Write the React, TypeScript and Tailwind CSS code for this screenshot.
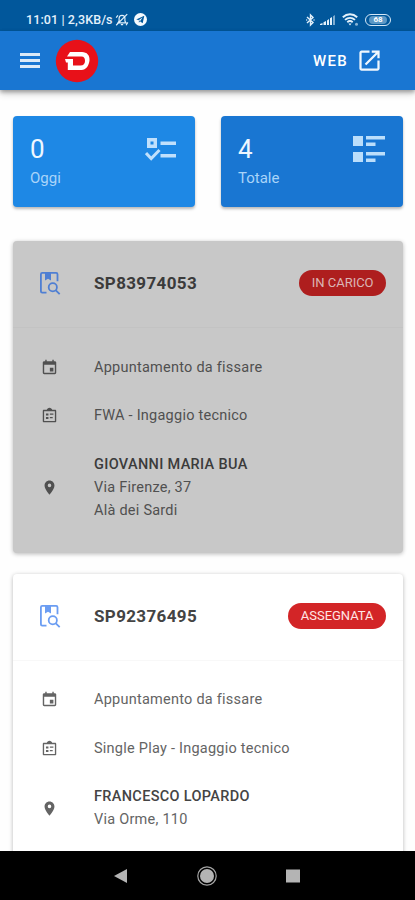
import React from "react";

function StatusBar() {
  return (
    <div className="flex h-[31px] items-end bg-[#01579b] pb-[4px] pl-[26px] pr-[24px] text-[#e3f1fb]">
      <div className="flex h-[15px] items-center">
        <span className="w-[87px] whitespace-nowrap text-[12.5px] font-medium leading-[15px] tracking-[0.1px]">11:01 | 2,3KB/s</span>
        <svg className="ml-[2px] h-[14px] w-[14px]" viewBox="0 0 24 24" fill="none" stroke="currentColor" strokeWidth="2">
          <path d="M5 17h14l-2-3V9c0-3-2-5-5-5S7 6 7 9v5zM10 20h4M2 21 21 2M2 8l3-4M22 16l-3 5" />
        </svg>
        <svg className="ml-[5px] h-[13px] w-[13px]" viewBox="0 0 24 24">
          <circle cx="12" cy="12" r="12" fill="#f4faff" />
          <path d="M4 12 19 5l-3 14-5-4-2 3v-5z" fill="#01579b" />
          <path d="m9 13 7-5-5 7z" fill="#f4faff" />
        </svg>
      </div>
      <div className="ml-auto flex h-[15px] items-center">
        <svg className="h-[14px] w-[9px]" viewBox="0 0 9 14" fill="none" stroke="currentColor" strokeWidth="1.4">
          <path d="m1 4 6 5.500L4.500 12V2L7 4.500 1 10" />
          <path d="M.2 7h1M7.500 7h1" />
        </svg>
        <svg className="ml-[5px] h-[12px] w-[16px]" viewBox="0 0 16 12" fill="currentColor">
          <path d="M0 11h2.500V9L0 10zM3.500 11H6V7L3.500 8.300zM7 11h2V5L7 6.500zM10 11h2V3l-2 1.300z" />
          <path d="M13 11h2V1l-2 1.200z" opacity=".55" />
        </svg>
        <svg className="ml-[6px] h-[13px] w-[17px]" viewBox="0 0 17 13" fill="none" stroke="currentColor" strokeWidth="1.9">
          <path d="M.8 4.300c4.300-4 10.100-4 14.400 0M3 6.900c3-2.700 7-2.700 10 0M5.300 9.300c1.700-1.500 3.700-1.500 5.400 0" />
          <path d="m6.500 10.600 1.500 1.800 1.500-1.800z" fill="currentColor" stroke="none" />
          <circle cx="14.500" cy="11.200" r="1.500" fill="currentColor" stroke="none" opacity=".6" />
        </svg>
        <div className="ml-[6px] flex h-[12px] w-[26px] items-center justify-center rounded-full border border-[#d4e8f7]">
          <span className="flex h-[8px] w-[18px] items-center justify-center rounded-full bg-[#5b97c5] text-[8px] font-bold leading-none text-white">68</span>
        </div>
      </div>
    </div>
  );
}

function AppBar() {
  return (
    <header className="flex h-[59px] items-center bg-[#1976d2] pl-[20px] pr-[32px] text-white shadow-[0_2px_4px_rgba(0,0,0,0.3),0_4px_7px_rgba(0,0,0,0.16)]">
      <div className="flex w-[20px] flex-col gap-[3px] opacity-85">
        <span className="h-[3px] bg-white" />
        <span className="h-[3px] bg-white" />
        <span className="h-[3px] bg-white" />
      </div>
      <svg className="ml-[15px] h-[44px] w-[44px]" viewBox="0 0 44 44">
        <circle cx="22" cy="22" r="21.200" fill="#e81119" />
        <path fill="#fff" fillRule="evenodd" d="M15 13h12c5 0 8 3.500 7.500 8.500S31 31 26.500 31H12.800v-7.500H11L10 20h8v6.500h7.500c3 0 4.500-2 4.500-4.500 0-3-1-4.500-3.500-4.500H12z" />
      </svg>
      <span className="ml-auto text-[15px] font-medium leading-[20px] tracking-[1.3px]">WEB</span>
      <svg className="ml-[8px] h-[27px] w-[27px]" viewBox="0 0 24 24" fill="#f1f8fe">
        <path d="M19 19H5V5h7V3H5c-1.110 0-2 .9-2 2v14c0 1.100.89 2 2 2h14c1.100 0 2-.9 2-2v-7h-2v7zM14 3v2h3.590l-9.830 9.830 1.410 1.410L19 6.410V10h2V3h-7z" />
      </svg>
    </header>
  );
}

function BookSearch({ color }: { color: string }) {
  return (
    <svg className="h-[24px] w-[22px]" viewBox="0 0 22 24" fill="none" stroke={color} strokeWidth="1.800">
      <path d="M7.500 21.600H3.200c-.9 0-1.300-.5-1.300-1.300V3.200c0-.8.4-1.300 1.300-1.300h14c.9 0 1.300.5 1.300 1.300v7" />
      <path d="M6 2v7.500l3-1.800 3 1.800V2z" fill={color} stroke="none" />
      <circle cx="13.800" cy="16.300" r="4.100" />
      <path d="m16.800 19.300 3.900 3.900" />
    </svg>
  );
}

function CalendarIcon() {
  return (
    <svg className="h-[17px] w-[17px]" viewBox="0 0 24 24" fill="currentColor">
      <path d="M19.500 3H18V1h-2v2H8V1H6v2H4.500C3.400 3 2.500 3.900 2.500 5v14.500c0 1.100.9 2 2 2h15c1.100 0 2-.9 2-2V5c0-1.100-.9-2-2-2zm0 16.500h-15V8h15v11.500zM12.500 12.500h5v5h-5z" />
    </svg>
  );
}

function BallotIcon() {
  return (
    <svg className="h-[17px] w-[17px]" viewBox="0 0 24 24" fill="currentColor">
      <path d="M20 4h-4.180C15.400 2.400 13.800 1 12 1s-3.400 1.400-3.820 3H4c-.9 0-1.500.6-1.500 1.500v14.500c0 .9.600 1.500 1.500 1.500h16c.9 0 1.500-.6 1.500-1.500V5.500c0-.9-.6-1.500-1.500-1.500zm-.4 15.600H4.400V6h15.200v13.600zM7 9h3.500v3H7zM7 14h3.500v3H7zM12.500 9h5v2h-5zM12.500 14h4v2h-4z" />
    </svg>
  );
}

function PinIcon() {
  return (
    <svg className="h-[17px] w-[17px]" viewBox="0 0 24 24" fill="currentColor">
      <path d="M12 2C8.130 2 5 5.130 5 9c0 5.250 7 13 7 13s7-7.750 7-13c0-3.870-3.130-7-7-7zm0 9.500a2.500 2.500 0 0 1 0-5 2.500 2.500 0 0 1 0 5z" />
    </svg>
  );
}

function StatCard({ value, label, bg, children }: { value: string; label: string; bg: string; children: React.ReactNode }) {
  return (
    <div className={`flex h-[91px] flex-1 justify-between rounded-[4px] pl-[17px] pr-[17px] pt-[17px] shadow-[0_2px_3px_rgba(0,0,0,0.28)] ${bg}`}>
      <div>
        <div className="text-[26px] leading-[33px] text-[#eef7ff]">{value}</div>
        <div className="text-[15px] leading-[24px] text-[#a9d4f9]">{label}</div>
      </div>
      {children}
    </div>
  );
}

function Row({ icon, children }: { icon: React.ReactNode; children: React.ReactNode }) {
  return (
    <div className="flex items-center py-[12.800px] pl-[28px]">
      <div className="mr-[36px] h-[17px] w-[17px] shrink-0">{icon}</div>
      <div className="whitespace-nowrap text-[14.500px] leading-[23px] tracking-[0.240px]">{children}</div>
    </div>
  );
}

type JobProps = {
  code: string;
  status: string;
  type: string;
  name: string;
  address: string[];
  dimmed?: boolean;
};

function JobCard({ code, status, type, name, address, dimmed }: JobProps) {
  return (
    <article className={`h-[312px] shrink-0 rounded-[4px] shadow-[0_1px_4px_rgba(0,0,0,0.28)] ${dimmed ? "bg-[#c8c8c8] text-[#505050]" : "bg-white text-[#646464]"}`}>
      <div className={`flex h-[87px] items-center border-b pl-[26px] pr-[17px] pb-[3px] ${dimmed ? "border-[#c3c3c3]" : "border-[#f8f8f8]"}`}>
        <BookSearch color={dimmed ? "#4f7fd3" : "#6b9df2"} />
        <h2 className={`ml-[33px] text-[17px] font-bold leading-[24px] tracking-[0.360px] ${dimmed ? "text-[#3b3b3b]" : "text-[#444]"}`}>{code}</h2>
        <span className={`ml-auto flex h-[26px] items-center rounded-full px-[12.500px] text-[13px] leading-[20px] tracking-[-0.03px] ${dimmed ? "bg-[#ae1e1e] text-[#dbb5b5]" : "bg-[#d32527] text-[#ffe5e5]"}`}>{status}</span>
      </div>
      <div className={dimmed ? "pt-[15px]" : "pt-[14.500px]"}>
        <Row icon={<CalendarIcon />}>Appuntamento da fissare</Row>
        <Row icon={<BallotIcon />}>{type}</Row>
        <Row icon={<PinIcon />}>
          <div className={`font-medium tracking-[0.330px] ${dimmed ? "text-[#3b3b3b]" : "text-[#444]"}`}>{name}</div>
          {address.map((line) => (
            <div key={line}>{line}</div>
          ))}
        </Row>
      </div>
    </article>
  );
}

export default function App() {
  return (
    <div className="flex h-[900px] w-[415px] flex-col overflow-hidden bg-[#fefefe] font-['Roboto',sans-serif]">
      <StatusBar />
      <AppBar />
      <main className="flex min-h-0 flex-1 flex-col overflow-hidden pl-[13px] pr-[12px] pt-[26px]">
        <div className="flex shrink-0 gap-[26px]">
          <StatCard value="0" label="Oggi" bg="bg-[#1e88e5]">
            <svg className="mr-[1px] mt-[2px] h-[28px] w-[32px]" viewBox="0 0 32 28" fill="#c0e0fc">
              <path fillRule="evenodd" d="M2 3h10v10H2zM5.500 6.500v3h3v-3zM15.500 6.500h15.500v3.500H15.500zM15.500 19h15.500v3.500H15.500z" />
              <path d="m1 18 5.200 5.500L14.500 15" fill="none" stroke="#c0e0fc" strokeWidth="3" />
            </svg>
          </StatCard>
          <StatCard value="4" label="Totale" bg="bg-[#1976d2]">
            <svg className="-mt-[1px] h-[32px] w-[34px]" viewBox="0 0 34 32" fill="#bbdefb">
              <path d="M1 4h10v10H1zM1 20h10v10H1zM14 4h19v3.600H14zM14 10.500h9.500v3.500H14zM14 20h19v3.600H14zM14 26.500h9.500v3.500H14z" />
            </svg>
          </StatCard>
        </div>
        <div className="mt-[34px] flex flex-col gap-[21px]">
          <JobCard dimmed code="SP83974053" status="IN CARICO" type="FWA - Ingaggio tecnico" name="GIOVANNI MARIA BUA" address={["Via Firenze, 37", "Alà dei Sardi"]} />
          <JobCard code="SP92376495" status="ASSEGNATA" type="Single Play - Ingaggio tecnico" name="FRANCESCO LOPARDO" address={["Via Orme, 110"]} />
        </div>
      </main>
      <nav className="flex h-[49px] shrink-0 items-center justify-center gap-[65px] bg-black pr-[1px]">
        <svg className="h-[20px] w-[20px]" viewBox="0 0 20 20">
          <path d="M3 10 16 3v14z" fill="#b4b4b4" />
        </svg>
        <svg className="h-[22px] w-[22px]" viewBox="0 0 22 22">
          <circle cx="11" cy="11" r="9.200" fill="none" stroke="#a5a5a5" strokeWidth="1.200" />
          <circle cx="11" cy="11" r="7" fill="#b4b4b4" />
        </svg>
        <svg className="h-[20px] w-[20px]" viewBox="0 0 20 20">
          <path d="M3 3.500h14v13H3z" fill="#b4b4b4" />
        </svg>
      </nav>
    </div>
  );
}
